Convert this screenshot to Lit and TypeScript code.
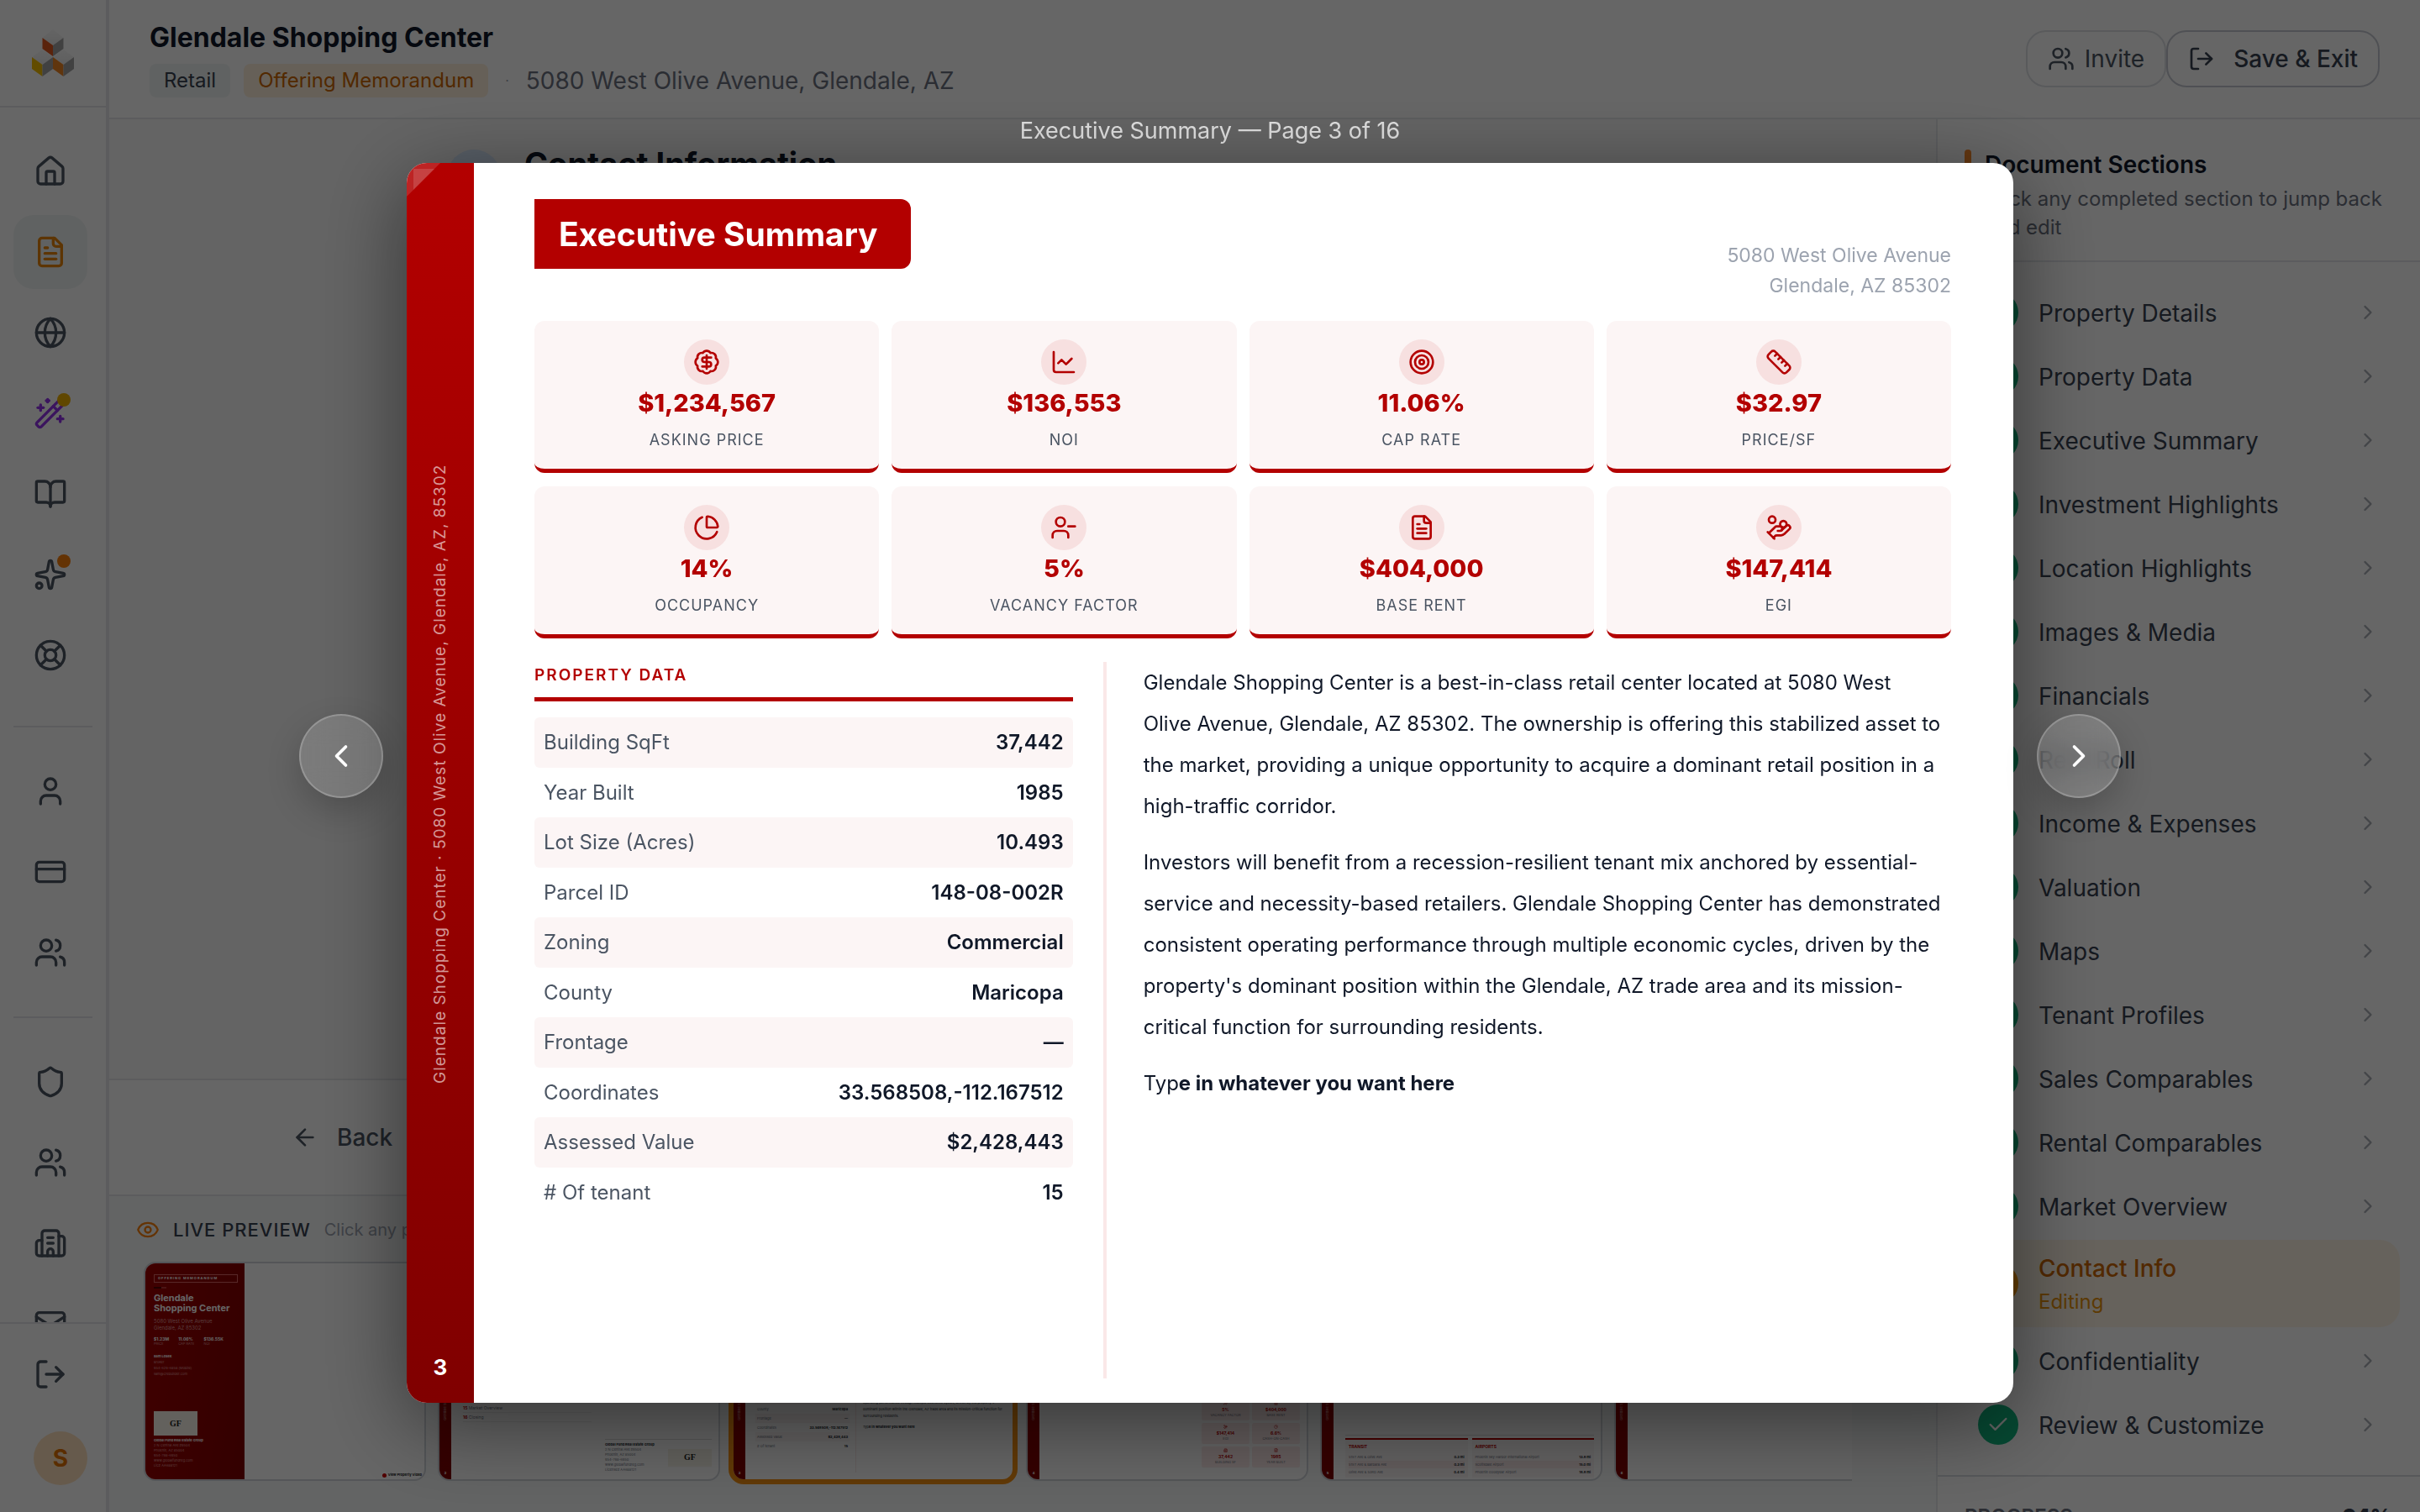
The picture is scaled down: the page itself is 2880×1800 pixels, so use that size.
import { LitElement, html, svg, css, nothing } from 'lit';
import { customElement, property, state } from 'lit/decorators.js';
import { classMap } from 'lit/directives/class-map.js';

const dot = (cx: number, cy: number, r: number) =>
  `M${cx - r} ${cy}a${r} ${r} 0 1 0 ${r * 2} 0a${r} ${r} 0 1 0 ${-r * 2} 0`;

const ICONS: Record<string, string[]> = {
  home: [
    'M15 21v-8a1 1 0 0 0-1-1h-4a1 1 0 0 0-1 1v8',
    'M3 10a2 2 0 0 1 .709-1.528l7-5.999a2 2 0 0 1 2.582 0l7 5.999A2 2 0 0 1 21 10v9a2 2 0 0 1-2 2H5a2 2 0 0 1-2-2z',
  ],
  file: [
    'M15 2H6a2 2 0 0 0-2 2v16a2 2 0 0 0 2 2h12a2 2 0 0 0 2-2V7Z',
    'M14 2v4a2 2 0 0 0 2 2h4',
    'M10 9H8',
    'M16 13H8',
    'M16 17H8',
  ],
  globe: [dot(12, 12, 10), 'M12 2a14.5 14.5 0 0 0 0 20 14.5 14.5 0 0 0 0-20', 'M2 12h20'],
  wand: [
    'm21.64 3.64-1.28-1.28a1.21 1.21 0 0 0-1.72 0L2.36 18.64a1.21 1.21 0 0 0 0 1.72l1.28 1.28a1.2 1.2 0 0 0 1.72 0L21.64 5.36a1.2 1.2 0 0 0 0-1.72',
    'm14 7 3 3',
    'M5 6v4',
    'M19 14v4',
    'M10 2v2',
    'M7 8H3',
    'M21 16h-4',
    'M11 3H9',
  ],
  book: [
    'M12 7v14',
    'M3 18a1 1 0 0 1-1-1V4a1 1 0 0 1 1-1h5a4 4 0 0 1 4 4 4 4 0 0 1 4-4h5a1 1 0 0 1 1 1v13a1 1 0 0 1-1 1h-6a3 3 0 0 0-3 3 3 3 0 0 0-3-3z',
  ],
  sparkles: [
    'M11.017 2.814a1 1 0 0 1 1.966 0l1.051 5.558a2 2 0 0 0 1.594 1.594l5.558 1.051a1 1 0 0 1 0 1.966l-5.558 1.051a2 2 0 0 0-1.594 1.594l-1.051 5.558a1 1 0 0 1-1.966 0l-1.051-5.558a2 2 0 0 0-1.594-1.594l-5.558-1.051a1 1 0 0 1 0-1.966l5.558-1.051a2 2 0 0 0 1.594-1.594z',
    dot(4, 20, 2),
  ],
  lifebuoy: [
    dot(12, 12, 10),
    dot(12, 12, 4),
    'm4.93 4.93 4.24 4.24',
    'm14.83 9.17 4.24-4.24',
    'm14.83 14.83 4.24 4.24',
    'm9.17 14.83-4.24 4.24',
  ],
  user: ['M19 21v-2a4 4 0 0 0-4-4H9a4 4 0 0 0-4 4v2', dot(12, 7, 4)],
  card: ['M4 5h16a2 2 0 0 1 2 2v10a2 2 0 0 1-2 2H4a2 2 0 0 1-2-2V7a2 2 0 0 1 2-2z', 'M2 10h20'],
  users: [
    'M16 21v-2a4 4 0 0 0-4-4H6a4 4 0 0 0-4 4v2',
    dot(9, 7, 4),
    'M22 21v-2a4 4 0 0 0-3-3.87',
    'M16 3.13a4 4 0 0 1 0 7.75',
  ],
  shield: [
    'M20 13c0 5-3.5 7.5-7.66 8.95a1 1 0 0 1-.67-.01C7.5 20.5 4 18 4 13V6a1 1 0 0 1 1-1c2 0 4.5-1.2 6.24-2.72a1.17 1.17 0 0 1 1.52 0C14.51 3.81 17 5 19 5a1 1 0 0 1 1 1z',
  ],
  building: [
    'M10 12h4',
    'M10 8h4',
    'M14 21v-3a2 2 0 0 0-4 0v3',
    'M6 10H4a2 2 0 0 0-2 2v7a2 2 0 0 0 2 2h16a2 2 0 0 0 2-2V9a2 2 0 0 0-2-2h-2',
    'M6 21V5a2 2 0 0 1 2-2h8a2 2 0 0 1 2 2v16',
  ],
  mail: [
    'm22 7-8.991 5.727a2 2 0 0 1-2.009 0L2 7',
    'M4 4h16a2 2 0 0 1 2 2v12a2 2 0 0 1-2 2H4a2 2 0 0 1-2-2V6a2 2 0 0 1 2-2z',
  ],
  logout: ['m16 17 5-5-5-5', 'M21 12H9', 'M9 21H5a2 2 0 0 1-2-2V5a2 2 0 0 1 2-2h4'],
  dollar: [
    'M3.85 8.62a4 4 0 0 1 4.78-4.77 4 4 0 0 1 6.74 0 4 4 0 0 1 4.78 4.78 4 4 0 0 1 0 6.74 4 4 0 0 1-4.77 4.78 4 4 0 0 1-6.75 0 4 4 0 0 1-4.78-4.77 4 4 0 0 1 0-6.76Z',
    'M16 8h-6a2 2 0 1 0 0 4h4a2 2 0 1 1 0 4H8',
    'M12 18V6',
  ],
  chart: ['M3 3v16a2 2 0 0 0 2 2h16', 'm19 9-5 5-4-4-3 3'],
  target: [dot(12, 12, 10), dot(12, 12, 6), dot(12, 12, 2)],
  ruler: [
    'M21.3 15.3a2.4 2.4 0 0 1 0 3.4l-2.6 2.6a2.4 2.4 0 0 1-3.4 0L2.7 8.7a2.41 2.41 0 0 1 0-3.4l2.6-2.6a2.41 2.41 0 0 1 3.4 0Z',
    'm14.5 12.5 2-2',
    'm11.5 9.5 2-2',
    'm8.5 6.5 2-2',
    'm17.5 15.5 2-2',
  ],
  pie: [
    'M21 12c.552 0 1.005-.449.95-.998a10 10 0 0 0-8.953-8.951c-.55-.055-.998.398-.998.95v8a1 1 0 0 0 1 1z',
    'M21.21 15.89A10 10 0 1 1 8 2.83',
  ],
  userMinus: ['M16 21v-2a4 4 0 0 0-4-4H6a4 4 0 0 0-4 4v2', dot(9, 7, 4), 'M22 11h-6'],
  coins: [
    'M11 15h2a2 2 0 1 0 0-4h-3c-.6 0-1.1.2-1.4.6L3 17',
    'm7 21 1.6-1.4c.3-.4.8-.6 1.4-.6h4c1.1 0 2.1-.4 2.8-1.2l4.6-4.4a2 2 0 0 0-2.75-2.91l-4.2 3.9',
    'm2 16 6 6',
    dot(16, 9, 2.9),
    dot(6, 5, 3),
  ],
  eye: [
    'M2.062 12.348a1 1 0 0 1 0-.696 10.75 10.75 0 0 1 19.876 0 1 1 0 0 1 0 .696 10.75 10.75 0 0 1-19.876 0',
    dot(12, 12, 3),
  ],
  right: ['m9 18 6-6-6-6'],
  left: ['m15 18-6-6 6-6'],
  back: ['m12 19-7-7 7-7', 'M19 12H5'],
  check: ['M20 6 9 17l-5-5'],
};

const icon = (name: string) => html`
  <svg class="icon" viewBox="0 0 24 24" fill="none" stroke="currentColor" stroke-width="2"
    stroke-linecap="round" stroke-linejoin="round" aria-hidden="true">
    ${ICONS[name].map((d) => svg`<path d=${d}></path>`)}
  </svg>
`;

const KPIS = [
  { icon: 'dollar', value: '$1,234,567', label: 'Asking Price' },
  { icon: 'chart', value: '$136,553', label: 'NOI' },
  { icon: 'target', value: '11.06%', label: 'Cap Rate' },
  { icon: 'ruler', value: '$32.97', label: 'Price/SF' },
  { icon: 'pie', value: '14%', label: 'Occupancy' },
  { icon: 'userMinus', value: '5%', label: 'Vacancy Factor' },
  { icon: 'file', value: '$404,000', label: 'Base Rent' },
  { icon: 'coins', value: '$147,414', label: 'EGI' },
];

const PROPERTY_DATA: [string, string][] = [
  ['Building SqFt', '37,442'],
  ['Year Built', '1985'],
  ['Lot Size (Acres)', '10.493'],
  ['Parcel ID', '148-08-002R'],
  ['Zoning', 'Commercial'],
  ['County', 'Maricopa'],
  ['Frontage', '—'],
  ['Coordinates', '33.568508,-112.167512'],
  ['Assessed Value', '$2,428,443'],
  ['# Of tenant', '15'],
];

const SUMMARY = [
  'Glendale Shopping Center is a best-in-class retail center located at 5080 West Olive Avenue, Glendale, AZ 85302. The ownership is offering this stabilized asset to the market, providing a unique opportunity to acquire a dominant retail position in a high-traffic corridor.',
  "Investors will benefit from a recession-resilient tenant mix anchored by essential-service and necessity-based retailers. Glendale Shopping Center has demonstrated consistent operating performance through multiple economic cycles, driven by the property's dominant position within the Glendale, AZ trade area and its mission-critical function for surrounding residents.",
];

const SPINE = 'Glendale Shopping Center · 5080 West Olive Avenue, Glendale, AZ, 85302';

@customElement('om-rail')
export class OmRail extends LitElement {
  static styles = css`
    :host {
      display: flex;
      flex-direction: column;
      width: 126px;
      flex: none;
      background: #fff;
      border-right: 4px solid #e5e7eb;
      color: #4b5563;
    }
    .logo {
      height: 126px;
      border-bottom: 2px solid #e5e7eb;
      display: flex;
      justify-content: center;
      align-items: center;
      flex: none;
    }
    .logo svg { width: 50px; height: 56px; }
    nav {
      flex: 1;
      min-height: 0;
      overflow: hidden;
      padding: 32px 16px 0;
    }
    .group { display: flex; flex-direction: column; gap: 8px; }
    .group + .group {
      margin-top: 32px;
      padding-top: 32px;
      border-top: 2px solid #e5e7eb;
    }
    .group:first-child { padding-bottom: 8px; }
    button {
      position: relative;
      width: 88px;
      height: 88px;
      flex: none;
      display: flex;
      align-items: center;
      justify-content: center;
      border: 0;
      border-radius: 24px;
      background: none;
      color: inherit;
      padding: 0;
    }
    button.active { background: #f1f5f4; color: #e8850a; }
    button.magic { color: #9333ea; }
    .icon { width: 40px; height: 40px; }
    .badge {
      position: absolute;
      top: 20px;
      right: 20px;
      width: 16px;
      height: 16px;
      border-radius: 50%;
      background: #f97f0a;
    }
    .magic .badge { background: #efb100; }
    .foot {
      border-top: 2px solid #e5e7eb;
      padding: 16px 16px 32px;
      display: flex;
      flex-direction: column;
      gap: 24px;
    }
    .avatar {
      width: 64px;
      height: 64px;
      margin-left: 24px;
      border-radius: 50%;
      background: #ffe2bf;
      color: #e17100;
      display: flex;
      align-items: center;
      justify-content: center;
      font-size: 28px;
      font-weight: 700;
    }
  `;

  private _item(name: string, label: string, cls = '', badge = false) {
    return html`<button class=${cls} aria-label=${label}>
      ${icon(name)}${badge ? html`<span class="badge"></span>` : nothing}
    </button>`;
  }

  render() {
    return html`
      <div class="logo">
        <svg viewBox="0 0 50 56" aria-hidden="true">
          <defs>
            <linearGradient id="lid" x1="0" y1="0" x2="0" y2="1">
              <stop offset="0" stop-color="#fafafa" /><stop offset="1" stop-color="#ececec" />
            </linearGradient>
          </defs>
          <path fill="url(#lid)" d="M25 0 37.500 10 25 19 12.500 10z" />
          <path fill="#e2571e" d="M12.500 10 25 19v13l-12.500-9z" />
          <path fill="#a3a3a3" d="M25 19 37.500 10v13L25 32z" />
          <path fill="url(#lid)" d="M12.500 24 25 33 12.500 42 0 33z" />
          <path fill="#f5bd00" d="M0 33l12.500 9v14L0 47z" />
          <path fill="#a3a3a3" d="M12.500 42 25 33v14l-12.500 9z" />
          <path fill="url(#lid)" d="M37.500 24 50 33l-12.500 9L25 33z" />
          <path fill="#f08421" d="M25 33l12.500 9v14L25 47z" />
          <path fill="#a3a3a3" d="M37.500 42 50 33v14l-12.500 9z" />
        </svg>
      </div>
      <nav>
        <div class="group">
          ${this._item('home', 'Home')} ${this._item('file', 'Documents', 'active')}
          ${this._item('globe', 'Websites')} ${this._item('wand', 'AI tools', 'magic', true)}
          ${this._item('book', 'Library')} ${this._item('sparkles', "What's new", '', true)}
          ${this._item('lifebuoy', 'Support')}
        </div>
        <div class="group">
          ${this._item('user', 'Profile')} ${this._item('card', 'Billing')}
          ${this._item('users', 'Team')}
        </div>
        <div class="group">
          ${this._item('shield', 'Admin')} ${this._item('users', 'Members')}
          ${this._item('building', 'Companies')} ${this._item('mail', 'Mail')}
        </div>
      </nav>
      <div class="foot">
        ${this._item('logout', 'Log out')}
        <span class="avatar">S</span>
      </div>
    `;
  }
}

@customElement('om-sections')
export class OmSections extends LitElement {
  @property({ attribute: false }) sections: string[] = [];
  @property() current = '';

  static styles = css`
    :host {
      display: flex;
      flex-direction: column;
      width: 574px;
      flex: none;
      background: #fff;
      border-left: 2px solid #e5e7eb;
    }
    header {
      display: flex;
      gap: 16px;
      padding: 36px 32px 22px;
      border-bottom: 2px solid #e5e7eb;
    }
    .bar {
      width: 8px;
      height: 40px;
      border-radius: 4px;
      background: #f98a2c;
      flex: none;
    }
    h2 {
      margin: 0 0 6px;
      font-size: 28px;
      line-height: 36px;
      font-weight: 600;
      color: #101828;
    }
    header p {
      margin: 0;
      font-size: 24px;
      line-height: 34px;
      color: #6b7280;
    }
    ul {
      list-style: none;
      margin: 0;
      padding: 24px;
      display: flex;
      flex-direction: column;
      gap: 4px;
    }
    button {
      width: 100%;
      height: 72px;
      display: flex;
      align-items: center;
      gap: 24px;
      padding: 0 24px;
      border: 0;
      border-radius: 24px;
      background: none;
      font: inherit;
      font-size: 28px;
      line-height: 36px;
      text-align: left;
      color: #374151;
    }
    .mark {
      width: 48px;
      height: 48px;
      border-radius: 50%;
      background: #10b981;
      color: #fff;
      display: flex;
      align-items: center;
      justify-content: center;
    }
    .mark .icon { width: 28px; height: 28px; }
    .name { flex: 1; padding-top: 2px; }
    .name small {
      display: block;
      margin-top: 6px;
      font-size: 24px;
      line-height: 32px;
      font-weight: 400;
      color: #e8920c;
    }
    .chev { color: #a8adb5; display: flex; }
    .chev .icon { width: 28px; height: 28px; }
    .current { height: 104px; background: #fff5e6; color: #cc6600; font-weight: 500; }
    .current .mark { background: #fe9a00; }
    footer {
      display: flex;
      justify-content: space-between;
      border-top: 2px solid #d9dce1;
      padding: 32px 34px 0 32px;
      font-size: 24px;
      line-height: 32px;
      font-weight: 600;
      color: #6b7280;
    }
    footer strong { color: #374151; }
  `;

  render() {
    return html`
      <header>
        <span class="bar"></span>
        <div>
          <h2>Document Sections</h2>
          <p>Click any completed section to jump back and edit</p>
        </div>
      </header>
      <ul>
        ${this.sections.map((name) => {
          const current = name === this.current;
          return html`<li>
            <button class=${classMap({ current })}>
              <span class="mark">${icon('check')}</span>
              <span class="name">${name}${current ? html`<small>Editing</small>` : nothing}</span>
              ${current ? nothing : html`<span class="chev">${icon('right')}</span>`}
            </button>
          </li>`;
        })}
      </ul>
      <footer><span>PROGRESS</span><strong>94%</strong></footer>
    `;
  }
}

@customElement('om-thumbs')
export class OmThumbs extends LitElement {
  static styles = css`
    :host {
      display: block;
      background: #f8fafa;
      border-top: 2px solid #e5e7eb;
      padding: 24px 100px 28px 32px;
    }
    .head {
      display: flex;
      align-items: center;
      gap: 16px;
      line-height: 32px;
      font-size: 20px;
      color: #9ca3af;
      margin-bottom: 22px;
    }
    .head .icon { width: 28px; height: 28px; color: #f97f0a; }
    .head h3 {
      margin: 0;
      font-size: 22px;
      font-weight: 500;
      letter-spacing: 1px;
      color: #374151;
    }
    .strip {
      display: flex;
      gap: 14px;
      padding: 0 9px;
      overflow: hidden;
      height: 270px;
    }
    .thumb {
      flex: none;
      width: 336px;
      height: 261px;
      box-sizing: border-box;
      display: flex;
      padding: 0;
      border: 2px solid #d1d5db;
      border-radius: 14px;
      overflow: hidden;
      background: #fff;
      font-size: 4px;
      line-height: 6px;
      text-align: left;
      color: #6b7280;
    }
    .thumb.selected { border-color: #f59012; box-shadow: 0 0 0 4px #f59012; }
    b { color: #101828; }
    .spine {
      width: 14px;
      flex: none;
      background: linear-gradient(#b30000, #800000);
      color: #fff;
      display: flex;
      flex-direction: column;
      align-items: center;
      justify-content: flex-end;
      gap: 60px;
      padding-bottom: 4px;
      box-sizing: border-box;
    }
    .spine i {
      writing-mode: vertical-rl;
      transform: rotate(180deg);
      font-style: normal;
      opacity: 0.6;
    }
    .body { flex: 1; display: flex; align-items: flex-end; padding: 0 8px 8px 14px; }
    .cover {
      width: 118px;
      flex: none;
      box-sizing: border-box;
      padding: 13px 8px 0 10px;
      background: linear-gradient(100deg, #a00000, #800000);
      color: #d99;
    }
    .cover b { color: #fff; }
    .cover .tag {
      border: 1px solid #d66;
      padding: 1px 4px;
      font-weight: 700;
      color: #fff;
      letter-spacing: 1px;
      white-space: nowrap;
    }
    .cover .dash {
      width: 9px;
      height: 2px;
      margin: 5px 0;
      background: #500000;
      border-right: 6px solid #b33;
    }
    .cover h4 { margin: 0 0 6px; font-size: 11px; line-height: 12px; color: #fff; white-space: nowrap; }
    .cover .addr { font-size: 6px; line-height: 8px; }
    .cover .figs { display: flex; gap: 11px; margin: 6px 0 8px; }
    .cover .figs b { display: block; font-size: 5px; }
    .cover .who { line-height: 7px; }
    .gf {
      width: 52px;
      height: 29px;
      display: flex;
      align-items: center;
      justify-content: center;
      background: #f7f3e8;
      font-family: 'Liberation Serif', serif;
      font-size: 10px;
      font-weight: 700;
      color: #222;
    }
    .cover .gf { margin: 41px 0 3px; }
    .video {
      margin: auto 3px 2px auto;
      display: flex;
      gap: 2px;
      align-items: center;
      font-weight: 700;
      color: #222;
    }
    .video::before {
      content: '';
      width: 5px;
      height: 5px;
      border-radius: 50%;
      background: #c00;
    }
    .toc { width: 153px; margin: 0 16px 60px 0; font-size: 5px; }
    .toc div { line-height: 10px; border-bottom: 1px solid #eee; }
    .toc b { color: #b30000; }
    .firm {
      flex: 1;
      border-top: 1px solid #ddd;
      padding-top: 3px;
      display: flex;
      justify-content: space-between;
      align-items: center;
    }
    .firm .gf { height: 21px; }
    table { width: 112px; border-spacing: 0; margin: 0 7px 26px -2px; }
    td { padding: 0 2px; height: 11px; }
    td + td { text-align: right; }
    tr:nth-child(odd) td { background: #faf5f5; }
    .text {
      flex: 1;
      align-self: stretch;
      border-left: 1px solid #f7e6e6;
      padding: 0 0 45px 8px;
      display: flex;
      flex-direction: column;
      justify-content: flex-end;
      color: #101828;
    }
    .text p { margin: 0 0 5px; line-height: 8px; }
    .kpis {
      flex: 1;
      display: grid;
      grid-template-columns: 57px 57px;
      justify-content: end;
      gap: 3px;
      margin-bottom: 6px;
      text-align: center;
    }
    .kpis div { height: 25px; background: #fbe9e9; line-height: 5px; border-radius: 2px; }
    .kpis b { display: block; color: #b30000; font-size: 5px; line-height: 8px; }
    .kpis .icon { width: 5px; height: 5px; color: #b30000; margin-top: 2px; }
    .places { flex: 1; display: flex; gap: 5px; border-top: 1px solid #ddd; padding-top: 3px; margin-bottom: -6px; }
    .places section { flex: 1; border-top: 2px solid #b30000; background: #faf5f5; padding: 4px 4px 2px; }
    .places h5 { margin: 0 0 4px; font-size: 5px; line-height: 8px; color: #b30000; }
    .places section div { display: flex; justify-content: space-between; line-height: 9px; }
    .places section div:nth-of-type(even) { background: #f7e6e6; }
  `;

  private _spine(n: number) {
    return html`<span class="spine"><i>Glendale Shopping</i><strong>${n}</strong></span>`;
  }

  private _place(title: string, rows: [string, string][]) {
    return html`<section>
      <h5>${title}</h5>
      ${rows.map(([name, dist]) => html`<div><span>${name}</span><b>${dist}</b></div>`)}
    </section>`;
  }

  render() {
    const stats = [
      ['userMinus', '5%', 'VACANCY FACTOR'],
      ['file', '$404,000', 'BASE RENT'],
      ['coins', '$147,414', 'EGI'],
      ['pie', '6.6%', 'CASH-ON-CASH'],
      ['building', '37,442', 'BUILDING SF'],
      ['file', '1985', 'YEAR BUILT'],
    ];
    return html`
      <div class="head">
        ${icon('eye')}
        <h3>LIVE PREVIEW</h3>
        <span>Click any page to enlarge</span>
      </div>
      <div class="strip">
        <div class="thumb">
          <div class="cover">
            <div class="tag">OFFERING MEMORANDUM</div>
            <div class="dash"></div>
            <h4>Glendale<br />Shopping Center</h4>
            <div class="addr">5080 West Olive Avenue<br />Glendale, AZ 85302</div>
            <div class="figs">
              <span><b>$1.23M</b>PRICE</span><span><b>11.06%</b>CAP RATE</span
              ><span><b>$136.55K</b>NOI</span>
            </div>
            <div class="who">
              <b>Sam Losek</b><br />Broker<br />954-629-6858 (Mobile)<br />sam@crebuilder.com
            </div>
            <div class="gf">GF</div>
            <b>Global Fund Real Estate Group</b><br />2 N Central Ave #9504<br />Phoenix, AZ
            85004<br />954-798-6950<br />www.globalfundreg.com<br />Lic# AA688121
          </div>
          <div class="video">View Property Video</div>
        </div>
        <div class="thumb">
          ${this._spine(2)}
          <div class="body">
            <div class="toc">
              <div><b>15</b> Market Overview</div>
              <div><b>16</b> Closing</div>
            </div>
            <div class="firm">
              <span
                ><b>Global Fund Real Estate Group</b><br />2 N Central Ave #9504<br />Phoenix, AZ
                85004<br />954-798-6950<br />www.globalfundreg.com<br />License# AA688121</span
              >
              <div class="gf">GF</div>
            </div>
          </div>
        </div>
        <div class="thumb selected">
          ${this._spine(3)}
          <div class="body">
            <table>
              ${PROPERTY_DATA.map(([k, v]) => html`<tr><td>${k}</td><td><b>${v}</b></td></tr>`)}
            </table>
            <div class="text">
              ${SUMMARY.map((p) => html`<p>${p}</p>`)}
              <p>Typ<b>e in whatever you want here</b></p>
            </div>
          </div>
        </div>
        <div class="thumb">
          ${this._spine(4)}
          <div class="body">
            <div class="kpis">
              ${stats.map(([i, v, l]) => html`<div>${icon(i)}<b>${v}</b>${l}</div>`)}
            </div>
          </div>
        </div>
        <div class="thumb">
          ${this._spine(5)}
          <div class="body">
            <div class="places">
              ${this._place('TRANSIT', [
                ['51ST Ave & Olive Ave', '0.3 mi'],
                ['51ST Ave & Barbara Ave', '0.3 mi'],
                ['Olive Ave & 53RD Ave', '0.4 mi'],
              ])}
              ${this._place('AIRPORTS', [
                ['Phoenix Sky Harbor International Airport', '13.8 mi'],
                ['Scottsdale Airport', '15.0 mi'],
                ['Phoenix Goodyear Airport', '18.8 mi'],
              ])}
            </div>
          </div>
        </div>
        <div class="thumb">${this._spine(6)}</div>
      </div>
    `;
  }
}

@customElement('om-slide')
export class OmSlide extends LitElement {
  @property({ type: Number }) page = 1;

  static styles = css`
    :host {
      display: flex;
      overflow: hidden;
      border-radius: 24px;
      background: #fff;
      box-shadow: 0 24px 100px rgba(0, 0, 0, 0.5);
    }
    .spine {
      position: relative;
      width: 80px;
      flex: none;
      box-sizing: border-box;
      padding: 40px 0 22px;
      background: linear-gradient(#b30000, #800000);
      color: #fff;
      display: flex;
      flex-direction: column;
      align-items: center;
    }
    .fold {
      position: absolute;
      left: 0;
      top: 0;
      width: 40px;
      height: 40px;
    }
    .spine span {
      flex: 1;
      writing-mode: vertical-rl;
      transform: rotate(180deg);
      text-align: center;
      font-size: 19px;
      line-height: 24px;
      letter-spacing: 1px;
      color: rgba(255, 255, 255, 0.6);
    }
    .spine strong { font-size: 26px; line-height: 40px; }
    .page {
      flex: 1;
      display: flex;
      flex-direction: column;
      padding: 43px 74px 29px 72px;
      min-width: 0;
    }
    .top { display: flex; justify-content: space-between; height: 145px; }
    h1 {
      margin: 0;
      align-self: flex-start;
      padding: 0 39px 0 29px;
      border-radius: 0 12px 12px 0;
      background: #b30000;
      color: #fff;
      font-size: 39px;
      line-height: 83px;
      font-weight: 700;
    }
    address {
      align-self: flex-end;
      padding-bottom: 24px;
      font-style: normal;
      text-align: right;
      font-size: 23px;
      line-height: 36px;
      color: #9ca3af;
    }
    .kpis {
      display: grid;
      grid-template-columns: repeat(4, 1fr);
      gap: 16px 15px;
    }
    .kpi {
      height: 154px;
      padding-top: 22px;
      border-bottom: 5px solid #b30000;
      border-radius: 12px;
      background: #fcf5f5;
      display: flex;
      flex-direction: column;
      align-items: center;
    }
    .disc {
      width: 54px;
      height: 54px;
      border-radius: 50%;
      background: #f7e0e0;
      color: #b30000;
      display: flex;
      align-items: center;
      justify-content: center;
      margin-bottom: 4px;
    }
    .disc .icon { width: 32px; height: 32px; }
    .kpi strong {
      font-size: 29px;
      line-height: 36px;
      font-weight: 800;
      color: #b30000;
      margin-bottom: 14px;
    }
    .kpi small {
      font-size: 18px;
      line-height: 24px;
      letter-spacing: 1px;
      text-transform: uppercase;
      color: #4b5563;
    }
    .detail { flex: 1; display: flex; margin-top: 28px; }
    .data { width: 38%; margin-right: 36px; }
    h2 {
      margin: 0 0 19px;
      padding-bottom: 10px;
      border-bottom: 5px solid #b30000;
      font-size: 19px;
      line-height: 32px;
      font-weight: 600;
      letter-spacing: 2px;
      color: #b30000;
    }
    table { width: 100%; border-spacing: 0; font-size: 24px; line-height: 32px; }
    tr { height: 60px; }
    tr:nth-child(even) { height: 59px; }
    th, td { padding: 0 11px; }
    th { text-align: left; font-weight: 400; color: #4b5563; border-radius: 6px 0 0 6px; }
    td { text-align: right; font-weight: 600; color: #101828; border-radius: 0 6px 6px 0; }
    tr:nth-child(odd) > * { background: #fcf5f5; }
    .text {
      flex: 1;
      border-left: 4px solid #fae8e8;
      padding: 0 10px 0 44px;
      font-size: 24px;
      line-height: 49px;
      color: #101828;
    }
    .text p { margin: 0 0 18px; }
  `;

  render() {
    return html`
      <div class="spine">
        <svg class="fold" viewBox="0 0 40 40" fill="#fff" fill-opacity="0.14" aria-hidden="true">
          <path d="M0 0h40L0 40z" />
          <path d="M8 7h25L8 32z" />
        </svg>
        <span>${SPINE}</span>
        <strong>${this.page}</strong>
      </div>
      <div class="page">
        <div class="top">
          <h1>Executive Summary</h1>
          <address>5080 West Olive Avenue<br />Glendale, AZ 85302</address>
        </div>
        <div class="kpis">
          ${KPIS.map(
            (k) => html`<div class="kpi">
              <span class="disc">${icon(k.icon)}</span>
              <strong>${k.value}</strong>
              <small>${k.label}</small>
            </div>`
          )}
        </div>
        <div class="detail">
          <div class="data">
            <h2>PROPERTY DATA</h2>
            <table>
              <tbody>
                ${PROPERTY_DATA.map(
                  ([k, v]) => html`<tr><th scope="row">${k}</th><td>${v}</td></tr>`
                )}
              </tbody>
            </table>
          </div>
          <div class="text">
            ${SUMMARY.map((p) => html`<p>${p}</p>`)}
            <p>Typ<b>e in whatever you want here</b></p>
          </div>
        </div>
      </div>
    `;
  }
}

@customElement('app-root')
export class AppRoot extends LitElement {
  @state() private _page = 3;

  private _sections = [
    'Property Details',
    'Property Data',
    'Executive Summary',
    'Investment Highlights',
    'Location Highlights',
    'Images & Media',
    'Financials',
    'Rent Roll',
    'Income & Expenses',
    'Valuation',
    'Maps',
    'Tenant Profiles',
    'Sales Comparables',
    'Rental Comparables',
    'Market Overview',
    'Contact Info',
    'Confidentiality',
    'Review & Customize',
  ];

  static styles = css`
    :host {
      display: block;
      font-family: Inter, 'Liberation Sans', sans-serif;
      color: #101828;
    }
    .app { display: flex; height: 100vh; overflow: hidden; }
    .work { flex: 1; min-width: 0; display: flex; flex-direction: column; }
    .topbar {
      display: flex;
      justify-content: space-between;
      align-items: center;
      height: 140px;
      flex: none;
      padding: 0 48px;
      border-bottom: 2px solid #e5e7eb;
      background: #fff;
    }
    .topbar h1 { margin: 0 0 10px; font-size: 32px; line-height: 42px; font-weight: 700; }
    .meta { display: flex; align-items: center; gap: 16px; }
    .chip {
      padding: 0 17px;
      border-radius: 8px;
      background: #f1f5f4;
      font-size: 24px;
      line-height: 40px;
      color: #374151;
    }
    .chip.kind { background: #fff0db; color: #cc6600; }
    .sep { padding: 0 4px; color: #9ca3af; }
    .addr { font-size: 28px; line-height: 40px; color: #6b7280; }
    .actions { display: flex; align-items: center; }
    .actions button, .back {
      display: flex;
      align-items: center;
      background: none;
      border: 2px solid #dfe2e6;
      border-radius: 24px;
      font: inherit;
      font-size: 28px;
      color: #4b5563;
    }
    .actions button { height: 68px; padding: 0 24px; gap: 12px; }
    .actions .save { gap: 22px; border-color: #c5c9d1; color: #374151; font-weight: 500; }
    .actions .icon, .back .icon { width: 32px; height: 32px; }
    .columns { flex: 1; min-height: 0; display: flex; }
    .center { flex: 1; min-width: 0; display: flex; flex-direction: column; }
    .form { flex: 1; min-height: 0; background: #fafafa; padding-top: 32px; }
    .form header {
      max-width: 1370px;
      margin: 0 auto;
      display: flex;
      align-items: center;
      gap: 28px;
    }
    .disc {
      width: 64px;
      height: 64px;
      border-radius: 50%;
      background: #dbeafe;
      color: #2563eb;
      display: flex;
      align-items: center;
      justify-content: center;
    }
    .disc .icon { width: 32px; height: 32px; }
    .form h2 { margin: 0; font-size: 38px; line-height: 42px; }
    .form p { margin: 0; font-size: 24px; line-height: 30px; color: #6b7280; }
    .pager { border-top: 2px solid #e5e7eb; background: #fff; }
    .pager div { max-width: 1792px; margin: 0 auto; padding: 34px 0; }
    .back { border-color: transparent; height: 68px; padding: 0 24px; gap: 22px; font-weight: 500; }
    .viewer {
      position: fixed;
      inset: 0;
      display: flex;
      align-items: center;
      justify-content: center;
      gap: 28px;
      background: rgba(0, 0, 0, 0.6);
    }
    .viewer figure { margin: 0; display: flex; flex-direction: column; gap: 12px; }
    .viewer figcaption {
      text-align: center;
      font-size: 27px;
      line-height: 52px;
      color: rgba(255, 255, 255, 0.8);
    }
    om-slide { height: 82vh; aspect-ratio: 478 / 369; }
    .step {
      width: 100px;
      height: 100px;
      flex: none;
      display: flex;
      align-items: center;
      justify-content: center;
      padding: 0;
      border: 2px solid rgba(255, 255, 255, 0.2);
      border-radius: 50%;
      background: rgba(255, 255, 255, 0.15);
      backdrop-filter: blur(16px);
      box-shadow: 0 16px 40px rgba(0, 0, 0, 0.2);
      color: #fff;
    }
    .step .icon { width: 44px; height: 44px; }
  `;

  private _go(step: number): void {
    this._page = Math.min(16, Math.max(1, this._page + step));
  }

  render() {
    return html`
      <div class="app">
        <om-rail></om-rail>
        <div class="work">
          <div class="topbar">
            <div>
              <h1>Glendale Shopping Center</h1>
              <div class="meta">
                <span class="chip">Retail</span>
                <span class="chip kind">Offering Memorandum</span>
                <span class="sep">·</span>
                <span class="addr">5080 West Olive Avenue, Glendale, AZ</span>
              </div>
            </div>
            <div class="actions">
              <button>${icon('users')}Invite</button>
              <button class="save">${icon('logout')}Save &amp; Exit</button>
            </div>
          </div>
          <div class="columns">
            <div class="center">
              <div class="form">
                <header>
                  <span class="disc">${icon('user')}</span>
                  <div>
                    <h2>Contact Information</h2>
                    <p>Broker and company details</p>
                  </div>
                </header>
              </div>
              <div class="pager">
                <div><button class="back">${icon('back')}Back</button></div>
              </div>
              <om-thumbs></om-thumbs>
            </div>
            <om-sections .sections=${this._sections} current="Contact Info"></om-sections>
          </div>
        </div>
      </div>
      <div class="viewer" role="dialog" aria-label="Page preview">
        <button class="step" aria-label="Previous page" @click=${() => this._go(-1)}>
          ${icon('left')}
        </button>
        <figure>
          <figcaption>Executive Summary — Page ${this._page} of 16</figcaption>
          <om-slide .page=${this._page}></om-slide>
        </figure>
        <button class="step" aria-label="Next page" @click=${() => this._go(1)}>
          ${icon('right')}
        </button>
      </div>
    `;
  }
}
